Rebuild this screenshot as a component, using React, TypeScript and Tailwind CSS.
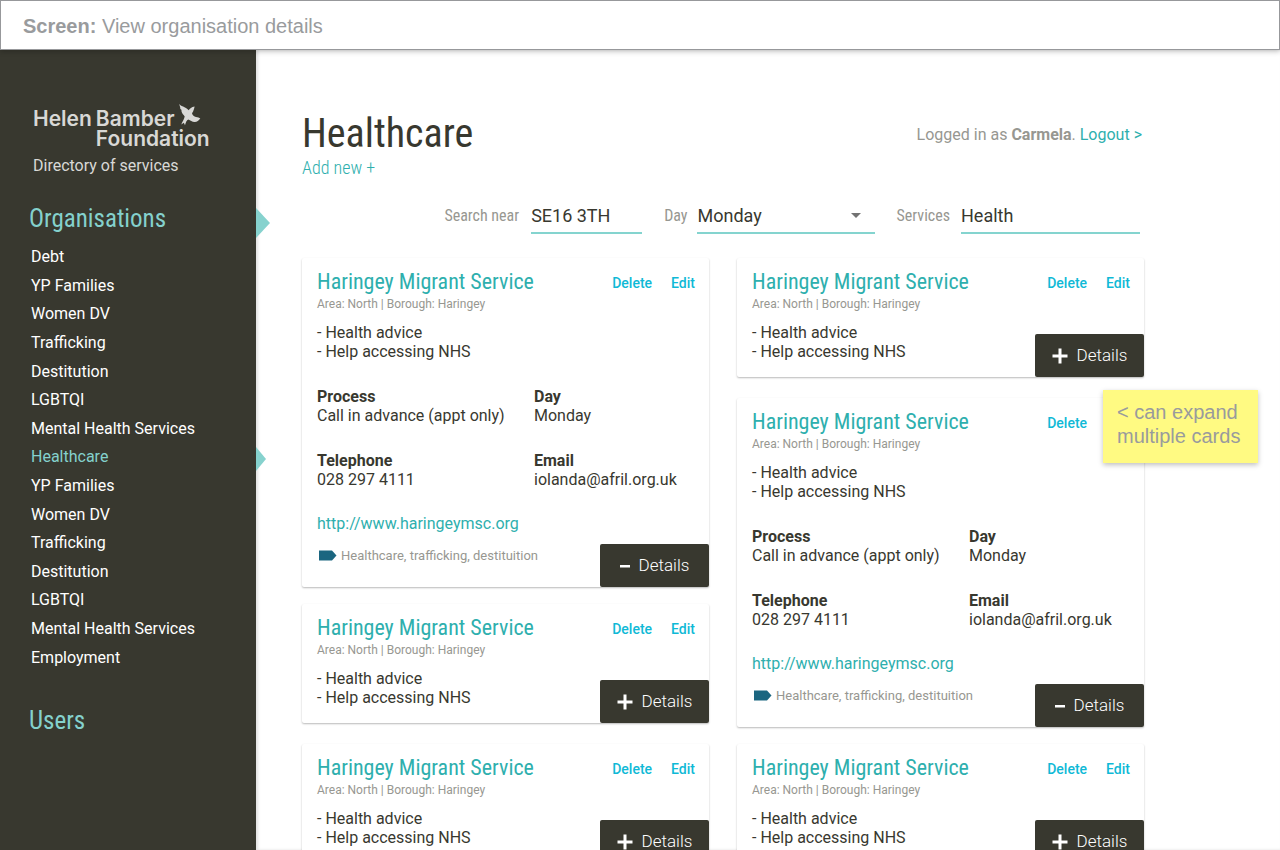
import { useState } from "react";

const condensed = "font-['Roboto_Condensed','Roboto',sans-serif]";

const navItems = [
  "Debt",
  "YP Families",
  "Women DV",
  "Trafficking",
  "Destitution",
  "LGBTQI",
  "Mental Health Services",
  "Healthcare",
  "YP Families",
  "Women DV",
  "Trafficking",
  "Destitution",
  "LGBTQI",
  "Mental Health Services",
  "Employment",
];
const activeIndex = 7;

function Bird() {
  return (
    <svg viewBox="0 0 22 22" className="size-[22px]" fill="currentColor" aria-hidden="true">
      <path d="M.3 0C1.800 1.800 3.600 2.300 5.500 3.200C7.600 4.200 8.800 5 9.600 6.200C11 4.600 12.400 2.900 15.600 2.400C15.200 4.200 14.800 6.500 13 9.300C13.600 11.600 15 12.600 17 13C18.800 13.200 20.300 13.600 21.300 14.600C19.800 16.600 17.800 18.200 15.500 18C13 17.600 11.500 16.200 9.300 15.400C7.600 16.200 6.800 18.300 6 21.300L4.800 18.800L2.300 20.600C3.200 18 5 15.800 5.700 12.600C4.700 10.800 3 9.800 2.600 7.800L2.400 5.800L1.300 5C1.600 3.200.4 1.800.3 0Z" />
    </svg>
  );
}

function Sidebar() {
  return (
    <aside className="w-64 shrink-0 bg-[#38382f] text-white">
      <div className="flex items-start pl-[33px] pt-[54px] text-[#d8d8d6]">
        <div className="grid grid-cols-[auto_auto] gap-x-1 font-['Inter',sans-serif] text-[21px] leading-5 font-semibold">
          <span className="self-end">Helen</span>
          <span className="flex h-[25px] items-end gap-1">
            Bamber
            <span className="self-start">
              <Bird />
            </span>
          </span>
          <span className="col-start-2">Foundation</span>
        </div>
      </div>
      <p className="pl-[33px] pt-[7px] text-[16px] leading-5 text-[#d8d8d6]">Directory of services</p>
      <nav aria-label="Main">
        <div className="relative mt-[27px] pl-[29px]">
          <a href="#organisations" className={`${condensed} text-[25px] leading-8 text-[#84d1cd]`}>
            Organisations
          </a>
          <svg viewBox="0 0 14 30" className="absolute left-64 top-[5px] h-[30px] w-[14px]" fill="#86d2ce" aria-hidden="true">
            <path d="M0 0L14 15L0 30Z" />
          </svg>
        </div>
        <ul className="mt-2 grid h-[429px] auto-rows-fr pl-[31px]">
          {navItems.map((item, i) => (
            <li key={i} className="relative flex items-center">
              <a
                href="#category"
                aria-current={i === activeIndex ? "page" : undefined}
                className={i === activeIndex ? "text-[16px] leading-6 text-[#84d1cd]" : "text-[16px] leading-6"}
              >
                {item}
              </a>
              {i === activeIndex && (
                <svg viewBox="0 0 10 24" className="absolute left-[225px] top-1 h-6 w-[10px]" fill="#86d2ce" aria-hidden="true">
                  <path d="M0 0L10 12L0 24Z" />
                </svg>
              )}
            </li>
          ))}
        </ul>
        <div className="mt-[33px] pl-[29px]">
          <a href="#users" className={`${condensed} text-[25px] leading-8 text-[#84d1cd]`}>
            Users
          </a>
        </div>
      </nav>
    </aside>
  );
}

function Field({ title, children }: { title: string; children: string }) {
  return (
    <div>
      <dt className="font-bold">{title}</dt>
      <dd>{children}</dd>
    </div>
  );
}

function Card({ initiallyOpen = false }: { initiallyOpen?: boolean }) {
  const [open, setOpen] = useState(initiallyOpen);
  return (
    <article
      className={`relative rounded-[2px] bg-white pl-[15px] text-[16px] leading-[19px] text-[#38382f] shadow-[0_1px_2px_rgba(0,0,0,0.28)] ${
        open ? "mb-[17px] h-[329px]" : "mb-[21px] h-[119px]"
      }`}
    >
      <div className="flex items-start justify-between pt-2 pr-[14px]">
        <h2 className={`${condensed} text-[22px] leading-8 text-[#2eafae]`}>Haringey Migrant Service</h2>
        <div className="flex gap-[19px] pt-2 text-[14px] leading-[18px] font-medium text-[#0fb9d6]">
          <button type="button">Delete</button>
          <button type="button">Edit</button>
        </div>
      </div>
      <p className="text-[12px] leading-3 text-[#979791]">Area: North | Borough: Haringey</p>
      <ul className="pt-[13px]">
        <li>- Health advice</li>
        <li>- Help accessing NHS</li>
      </ul>
      {open && (
        <>
          <dl className="grid grid-cols-[217px_1fr] gap-y-[26px] pt-[26px]">
            <Field title="Process">Call in advance (appt only)</Field>
            <Field title="Day">Monday</Field>
            <Field title="Telephone">028 297 4111</Field>
            <Field title="Email">iolanda@afril.org.uk</Field>
          </dl>
          <a href="http://www.haringeymsc.org" className="mt-[25px] block text-[#2eafae]">
            http://www.haringeymsc.org
          </a>
          <p className="mt-[14px] flex items-center gap-1 pl-[2px] text-[13px] leading-[18px] text-[#979791]">
            <svg viewBox="0 0 18 12" className="h-3 w-[18px]" fill="#1b6680" aria-hidden="true">
              <path d="M0 .5H13L17.500 5.500L13 10.500H0Z" />
            </svg>
            Healthcare, trafficking, destituition
          </p>
        </>
      )}
      <button
        type="button"
        aria-expanded={open}
        onClick={() => setOpen(!open)}
        className="absolute right-0 bottom-0 flex h-[43px] w-[109px] items-center justify-center gap-[9px] rounded-[2px] bg-[#38382f] text-[17px] font-light text-white"
      >
        {open ? (
          <svg viewBox="0 0 10 10" className="size-[10px]" fill="currentColor" aria-hidden="true">
            <path d="M0 4H10V6.500H0Z" />
          </svg>
        ) : (
          <svg viewBox="0 0 16 16" className="size-4" fill="currentColor" aria-hidden="true">
            <path d="M6.500 .5H9.500V6.500H15.500V9.500H9.500V15.500H6.500V9.500H.5V6.500H6.500Z" />
          </svg>
        )}
        Details
      </button>
    </article>
  );
}

const labelClass = "font-['Roboto_Condensed','Roboto',sans-serif] text-[16px] leading-5 text-[#979791]";
const inputClass = "h-9 border-b-2 border-[#84d4cf] bg-transparent pt-px text-[18px] text-[#38382f] outline-none";

function Filters() {
  return (
    <form className="flex items-center justify-end pt-[19px] pr-1">
      <label htmlFor="near" className={labelClass}>
        Search near
      </label>
      <input id="near" defaultValue="SE16 3TH" className={`${inputClass} ml-3 w-[111px]`} />
      <label htmlFor="day" className={`${labelClass} ml-[22px]`}>
        Day
      </label>
      <div className="relative ml-[10px]">
        <select id="day" defaultValue="Monday" className={`${inputClass} w-[178px] appearance-none`}>
          <option>Monday</option>
          <option>Tuesday</option>
          <option>Wednesday</option>
          <option>Thursday</option>
          <option>Friday</option>
        </select>
        <svg viewBox="0 0 10 5" className="pointer-events-none absolute right-[14px] top-[15px] h-[5px] w-[10px]" fill="#737373" aria-hidden="true">
          <path d="M0 0H10L5 5Z" />
        </svg>
      </div>
      <label htmlFor="services" className={`${labelClass} ml-[21px]`}>
        Services
      </label>
      <input id="services" defaultValue="Health" className={`${inputClass} ml-[11px] w-[179px]`} />
    </form>
  );
}

export default function App() {
  return (
    <div className="flex h-screen flex-col bg-white font-['Roboto',sans-serif]">
      <header className="z-10 flex h-[50px] shrink-0 items-center border border-[#97989b] bg-white pl-[22px] pt-[2px] font-['Liberation_Sans',Arial,sans-serif] text-[20px] text-[#999b9d] shadow-[0_2px_5px_rgba(0,0,0,0.2)]">
        <p>
          <strong>Screen:</strong> View organisation details
        </p>
      </header>
      <div className="flex min-h-0 flex-1">
        <Sidebar />
        <main className="min-w-0 flex-1 overflow-y-auto pl-[46px] pr-[136px] shadow-[inset_2px_0_3px_rgba(0,0,0,0.12)] [scrollbar-width:none]">
          <div className="flex items-start justify-between pt-[61px]">
            <div>
              <h1 className={`${condensed} text-[40px] leading-[46px] text-[#38382f]`}>Healthcare</h1>
              <button type="button" className={`${condensed} block text-[18px] leading-[22px] font-light text-[#2eafae]`}>
                Add new +
              </button>
            </div>
            <p className="pt-[14px] pr-[2px] text-[16px] leading-5 text-[#979791]">
              Logged in as <strong>Carmela</strong>.{" "}
              <a href="#logout" className="text-[#2eafae]">
                Logout &gt;
              </a>
            </p>
          </div>
          <Filters />
          <section className="mt-6 grid grid-cols-2 gap-x-7">
            <div>
              <Card initiallyOpen />
              <Card />
              <Card />
            </div>
            <div className="relative">
              <Card />
              <Card initiallyOpen />
              <Card />
              <aside className="absolute top-[132px] -right-[114px] h-[73px] w-[155px] bg-[#fffa82] px-[14px] pt-[10px] font-['Liberation_Sans',Arial,sans-serif] text-[20px] leading-6 text-[#999b9d] shadow-[0_2px_5px_rgba(0,0,0,0.25)]">
                &lt; can expand multiple cards
              </aside>
            </div>
          </section>
        </main>
      </div>
    </div>
  );
}
